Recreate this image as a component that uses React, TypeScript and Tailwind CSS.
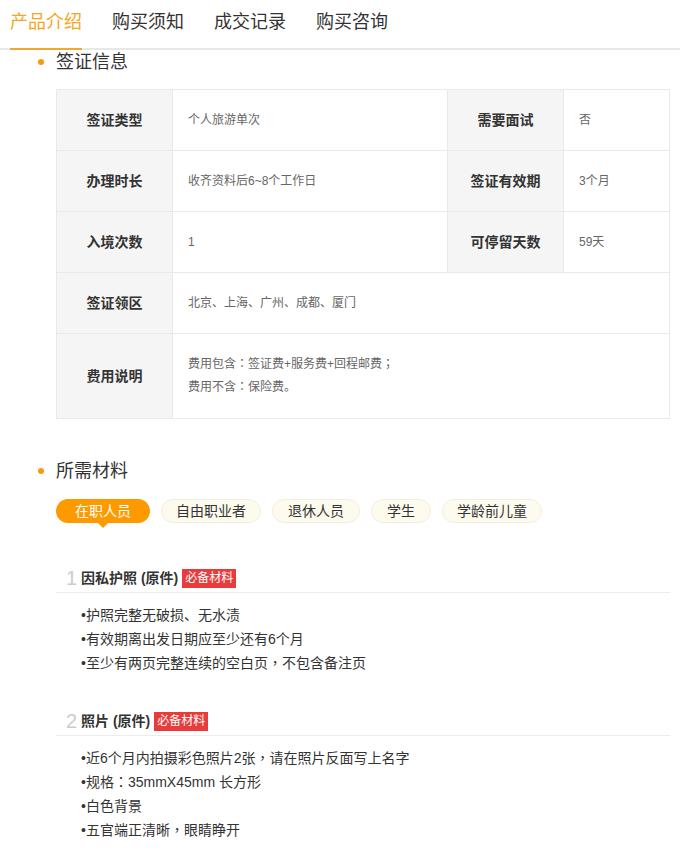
import React from "react";

const FONT = {
  fontFamily: '"Liberation Sans", "Noto Sans CJK SC", sans-serif',
};

// centred full-width punctuation, as in the original page font
function Txt({ s }: { s: string }) {
  const parts = s.split(/([：，；])/);
  return (
    <>
      {parts.map((p, i) =>
        /^[：，；]$/.test(p) ? (
          <span
            key={i}
            className="font-['Noto_Sans_CJK_TC',sans-serif] leading-[0]"
          >
            {p}
          </span>
        ) : (
          <React.Fragment key={i}>{p}</React.Fragment>
        )
      )}
    </>
  );
}

const tabs = ["产品介绍", "购买须知", "成交记录", "购买咨询"];

const rows: { cells: [string, string, string?, string?] }[] = [
  { cells: ["签证类型", "个人旅游单次", "需要面试", "否"] },
  { cells: ["办理时长", "收齐资料后6~8个工作日", "签证有效期", "3个月"] },
  { cells: ["入境次数", "1", "可停留天数", "59天"] },
  { cells: ["签证领区", "北京、上海、广州、成都、厦门"] },
];

const groups = [
  { name: "在职人员", w: "w-[94px]" },
  { name: "自由职业者", w: "w-[100px]" },
  { name: "退休人员", w: "w-[88px]" },
  { name: "学生", w: "w-[60px]" },
  { name: "学龄前儿童", w: "w-[100px]" },
];

const materials = [
  {
    no: 1,
    title: "因私护照 (原件)",
    lines: [
      "护照完整无破损、无水渍",
      "有效期离出发日期应至少还有6个月",
      "至少有两页完整连续的空白页，不包含备注页",
    ],
  },
  {
    no: 2,
    title: "照片 (原件)",
    lines: [
      "近6个月内拍摄彩色照片2张，请在照片反面写上名字",
      "规格：35mmX45mm 长方形",
      "白色背景",
      "五官端正清晰，眼睛睁开",
    ],
  },
];

function SectionTitle({ children }: { children: React.ReactNode }) {
  return (
    <div className="flex h-[24px] items-center pl-[38px]">
      <span className="h-[6px] w-[6px] rounded-full bg-[#fa9a0a]" />
      <span className="ml-[12px] text-[18px] leading-[24px] text-[#333]">
        {children}
      </span>
    </div>
  );
}

export default function App() {
  return (
    <div className="w-[680px] bg-white pb-[20px]" style={FONT}>
      <nav className="flex h-[50px] items-start gap-[30px] border-b-2 border-[#e8e8e8] pl-[10px]">
        {tabs.map((t, i) => (
          <div
            key={t}
            className={
              i === 0
                ? "h-[50px] border-b-2 border-[#f0a830] pt-[10px] text-[18px] leading-[24px] text-[#f5a623]"
                : "h-[50px] pt-[10px] text-[18px] leading-[24px] text-[#333]"
            }
          >
            {t}
          </div>
        ))}
      </nav>

      <SectionTitle>签证信息</SectionTitle>

      <table className="ml-[56px] mt-[15px] w-[614px] border-collapse">
        <colgroup>
          <col className="w-[116px]" />
          <col className="w-[275px]" />
          <col className="w-[116px]" />
          <col />
        </colgroup>
        <tbody>
          {rows.map((r) => (
            <tr key={r.cells[0]} className="h-[61px]">
              <td className="border border-[#e9e9e9] bg-[#f5f5f5] text-center text-[14px] font-bold text-[#333]">
                {r.cells[0]}
              </td>
              <td
                colSpan={r.cells[2] ? 1 : 3}
                className="border border-[#e9e9e9] pl-[15px] text-[12px] text-[#666]"
              >
                {r.cells[1]}
              </td>
              {r.cells[2] && (
                <>
                  <td className="border border-[#e9e9e9] bg-[#f5f5f5] text-center text-[14px] font-bold text-[#333]">
                    {r.cells[2]}
                  </td>
                  <td className="border border-[#e9e9e9] pl-[15px] text-[12px] text-[#666]">
                    {r.cells[3]}
                  </td>
                </>
              )}
            </tr>
          ))}
          <tr className="h-[85px]">
            <td className="border border-[#e9e9e9] bg-[#f5f5f5] text-center text-[14px] font-bold text-[#333]">
              费用说明
            </td>
            <td
              colSpan={3}
              className="border border-[#e9e9e9] pl-[15px] text-[12px] leading-[23px] text-[#666]"
            >
              <div>
                <Txt s="费用包含：签证费+服务费+回程邮费；" />
              </div>
              <div>
                <Txt s="费用不含：保险费。" />
              </div>
            </td>
          </tr>
        </tbody>
      </table>

      <div className="mt-[40px]">
        <SectionTitle>所需材料</SectionTitle>
      </div>

      <div className="ml-[56px] mt-[16px] flex gap-[11px]">
        {groups.map((g, i) =>
          i === 0 ? (
            <div
              key={g.name}
              className={`relative h-[24px] ${g.w} rounded-full bg-[#fd9a00] text-center text-[14px] leading-[24px] text-white`}
            >
              {g.name}
              <span className="absolute left-1/2 top-[24px] -ml-[5px] h-0 w-0 border-l-[5px] border-r-[5px] border-t-[5px] border-l-transparent border-r-transparent border-t-[#fd9a00]" />
            </div>
          ) : (
            <div
              key={g.name}
              className={`h-[24px] ${g.w} rounded-full border border-[#f3eedc] bg-[#fdfaee] text-center text-[14px] leading-[22px] text-[#333]`}
            >
              {g.name}
            </div>
          )
        )}
      </div>

      {materials.map((m, idx) => (
        <div
          key={m.no}
          className={idx === 0 ? "ml-[56px] mr-[10px] mt-[41px]" : "ml-[56px] mr-[10px] mt-[32px]"}
        >
          <div className="flex h-[29px] items-center border-b border-[#ececec] pl-[10px]">
            <span className="w-[8px] text-[20px] leading-[24px] text-[#ccc]">
              {m.no}
            </span>
            <span className="ml-[7px] text-[14px] font-bold text-[#333]">
              {m.title}
            </span>
            <span className="ml-[4px] h-[19px] bg-[#e93b3b] px-[3px] text-[12px] leading-[19px] text-white">
              必备材料
            </span>
          </div>
          <ul className="mt-[10px] pl-[25px] text-[14px] leading-[24px] text-[#333]">
            {m.lines.map((l) => (
              <li key={l}>
                •<Txt s={l} />
              </li>
            ))}
          </ul>
        </div>
      ))}
    </div>
  );
}
